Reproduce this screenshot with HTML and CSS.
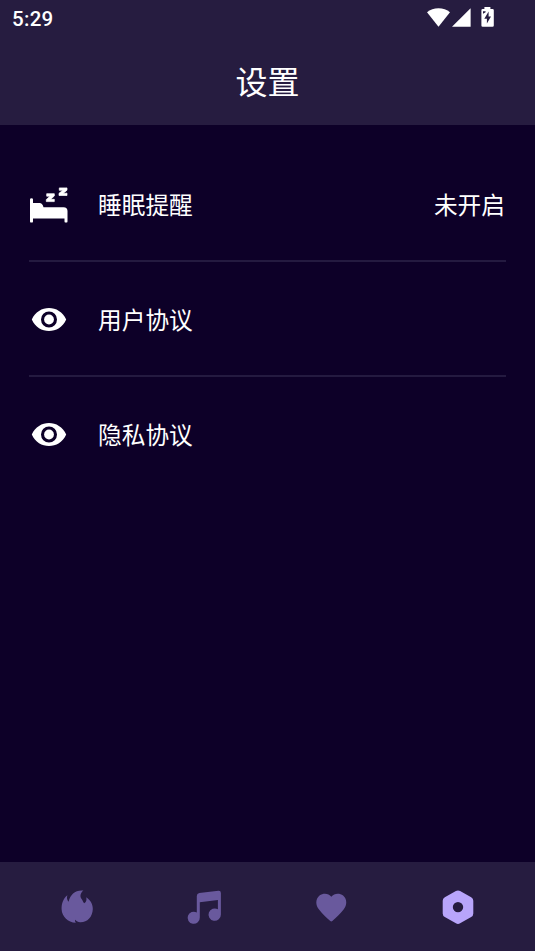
FILE: index.html
```html
<!DOCTYPE html>
<html lang="zh-CN">
<head>
<meta charset="utf-8">
<title>设置</title>
<link rel="stylesheet" href="styles.css">
</head>
<body>
<div class="app">
  <header class="header">
    <div class="status">
      <span class="time">5:29</span>
      <svg class="status-icons" viewBox="425 5 72 24">
        <path d="M427 12.2C433 6.800 444 6.800 450 12.200L438.500 26.700Z"/>
        <path d="M452 26.700L470.600 8.200V26.700Z"/>
        <path d="M484.400 7h6v2h2.100q1.300 0 1.300 1.300v15.200q0 1.300-1.300 1.300h-9.800q-1.300 0-1.300-1.300V10.300q0-1.300 1.300-1.300h1.700z"/>
        <path class="bolt" d="M488.600 11.500L484.300 18.800H486.900V23.500L491 16.600H488.600ZM483 11.300h2.600v1l-2.600 1.400z"/>
      </svg>
    </div>
    <h1 class="title">设置</h1>
  </header>
  <main class="list">
    <div class="row">
      <svg class="icon" viewBox="29 184 40 40">
        <path d="M30 199.500q0-1.200 1.500-1.200t1.500 1.200V203H39.500Q42.300 203 43.500 207.200H63.500Q67.500 207.200 67.500 211V221.400q0 1.200-1.500 1.200t-1.500-1.200V218.600H33V221.400q0 1.200-1.500 1.200t-1.500-1.200Z"/>
        <path class="snore" d="M46.700 193.700H54.300V196L50.600 199.300H54.300V201.600H46.300V199.500L50 196.200H46.700ZM59.300 187.900H67V190.200L63.300 193.200H67V195.500H59V193.300L62.800 190.300H59.300Z"/>
      </svg>
      <span class="label">睡眠提醒</span>
      <span class="value">未开启</span>
    </div>
    <div class="row">
      <svg class="icon" viewBox="29 299 40 40"><path fill-rule="evenodd" d="M31.800 319.500C38.500 304.100 59.500 304.100 66.200 319.500C59.500 334.900 38.500 334.900 31.800 319.500ZM49 311.500a8 8 0 1 0 0 16a8 8 0 1 0 0-16Z"/><circle cx="49" cy="319.500" r="4.900"/></svg>
      <span class="label">用户协议</span>
    </div>
    <div class="row">
      <svg class="icon" viewBox="29 299 40 40"><path fill-rule="evenodd" d="M31.800 319.500C38.500 304.100 59.500 304.100 66.200 319.500C59.500 334.900 38.500 334.900 31.800 319.500ZM49 311.500a8 8 0 1 0 0 16a8 8 0 1 0 0-16Z"/><circle cx="49" cy="319.500" r="4.900"/></svg>
      <span class="label">隐私协议</span>
    </div>
  </main>
  <nav class="tabs">
    <a class="tab"><svg viewBox="57.400 887 40 40"><path d="M83.800 890.600C80.300 893.500 80.200 897 82.200 899.300C83.200 900.600 83.300 902 84.600 903.200C86.600 902.300 87.200 900.500 86.700 897.300C91 900.300 93.300 904.500 93.200 909C93 917 87.500 922.600 80.500 922.300C78.500 922.200 77 921.300 75.500 919.800C75.200 921 75.500 921.800 76.300 922.800C68 922.500 62.300 916.500 62 909.300C61.900 903.500 63.500 898.800 67.800 895.300C67 897.700 67.300 899.800 69 901.800C70.800 894.200 75.800 889.800 83.800 890.600Z"/></svg></a>
    <a class="tab"><svg viewBox="184.100 887 40 40"><path d="M196.900 896Q196.900 893.400 199.400 893.100L218.500 890.700Q221 890.500 221 893V914.500A6.200 6.200 0 1 1 218 909.300V899.900L199.900 902.200V917.500A6.100 6.100 0 1 1 196.900 912.500Z"/></svg></a>
    <a class="tab"><svg viewBox="310.900 887 40 40"><path d="M331.200 896.700C334 893 339.500 892.700 343 895.500C347.100 899 347.200 905 343.500 909.500C340 914 335.800 918 332.200 921Q331.200 921.800 330.200 921C326.500 918 322.300 914 318.900 909.500C315.200 905 315.300 899 319.400 895.500C323 892.700 328.500 893 331.200 896.700Z"/></svg></a>
    <a class="tab active"><svg viewBox="437.900 887 40 40"><path fill-rule="evenodd" d="M455.800 891Q457.900 889.800 460 891L471.100 897.200Q473.200 898.400 473.200 900.800V913.500Q473.200 915.800 471.100 917L460 923.300Q457.900 924.500 455.800 923.300L444.700 917Q442.600 915.800 442.600 913.500V900.800Q442.600 898.400 444.700 897.200ZM457.900 901.900a5.200 5.200 0 1 0 0 10.400a5.200 5.200 0 1 0 0-10.400Z"/></svg></a>
  </nav>
</div>
</body>
</html>
```
FILE: styles.css
```css
* { box-sizing: border-box; }

body {
  margin: 0;
  background: #0d0028;
  color: #fff;
  font-family: Roboto, "Noto Sans CJK SC", sans-serif;
}

.app {
  display: flex;
  flex-direction: column;
  height: 951px;
}

.header {
  height: 125px;
  background: #261c40;
}

.status {
  display: flex;
  justify-content: space-between;
  align-items: center;
  height: 37px;
  padding: 0 38px 3px 12px;
}

.time {
  padding-top: 3px;
  font-size: 20.500px;
  font-weight: 500;
  letter-spacing: 0.3px;
}

.status-icons {
  width: 72px;
  height: 24px;
  fill: #fff;
}

.bolt { fill: #261c40; }

.title {
  margin: 0;
  font-family: "Noto Sans CJK SC", sans-serif;
  font-size: 32px;
  font-weight: 400;
  line-height: 86px;
  text-align: center;
}

.list {
  flex: 1;
  padding: 22px 29px 0;
}

.row {
  display: flex;
  align-items: center;
  height: 115px;
  border-bottom: 2px solid #241a40;
  font-family: "Noto Sans CJK SC", sans-serif;
  font-size: 23.700px;
}

.row:last-child { border-bottom-color: transparent; }

.icon {
  width: 40px;
  height: 40px;
  margin-right: 29px;
  fill: #fff;
}

.snore {
  stroke: #fff;
  stroke-width: 0.7;
  stroke-linejoin: round;
}

.value {
  margin-left: auto;
  padding-right: 1px;
}

.tabs {
  display: flex;
  height: 89px;
  padding: 0 14px;
  background: #261c40;
}

.tab {
  display: flex;
  flex: 1;
  align-items: center;
  justify-content: center;
}

.tab svg {
  width: 40px;
  height: 40px;
  fill: #69599d;
}

.active svg { fill: #b8a5fb; }
```
